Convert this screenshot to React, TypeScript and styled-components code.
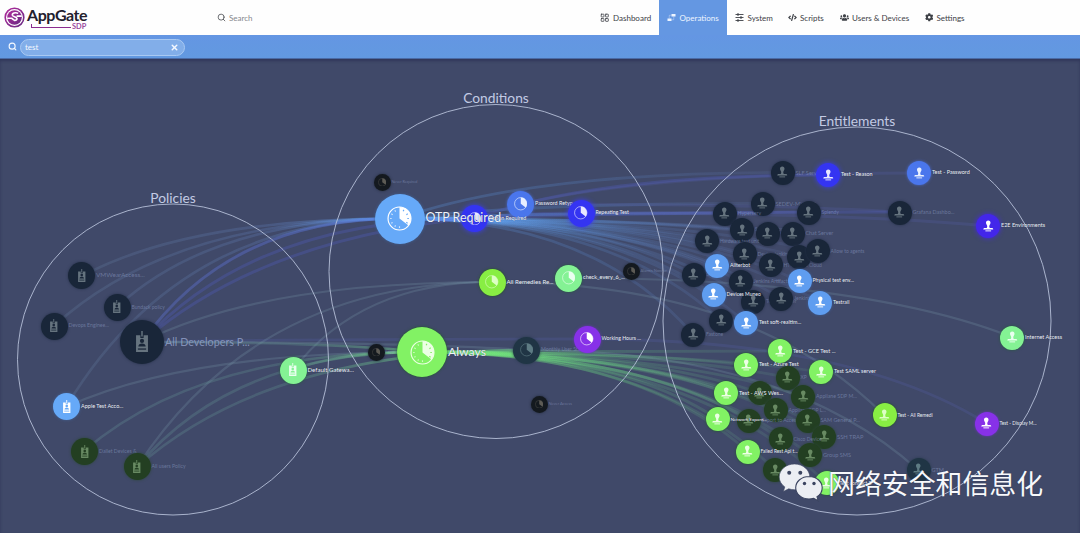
import React from 'react';
import styled, { createGlobalStyle, css } from 'styled-components';
import { LuSearch, LuLayoutGrid, LuX } from 'react-icons/lu';
import { FaCog, FaUsers, FaCode } from 'react-icons/fa';

const GlobalStyle = createGlobalStyle`
  * { box-sizing: border-box; }
  body { margin: 0; background: #404969; font-family: Lato, "Noto Sans CJK SC", sans-serif; }
`;

const Page = styled.div`
  display: flex;
  flex-direction: column;
  width: 1080px;
  height: 533px;
  overflow: hidden;
  background: #404969;
`;

const Header = styled.header`
  display: flex;
  align-items: stretch;
  flex: none;
  height: 35px;
  background: #fefefe;
`;

const Brand = styled.div`
  display: flex;
  align-items: center;
  width: 217px;
  padding-left: 4px;
  gap: 2px;
`;

const BrandText = styled.div`
  display: flex;
  flex-direction: column;
  width: 60px;
  padding-top: 1px;
`;

const BrandName = styled.span`
  font-size: 16px;
  font-weight: 700;
  line-height: 17px;
  letter-spacing: -0.45px;
  color: #23202d;
`;

const BrandSub = styled.span`
  display: flex;
  align-items: center;
  gap: 1px;
  padding-left: 4px;
  height: 7px;
  font-size: 7.4px;
  font-weight: 700;
  line-height: 7px;
  color: #9a4a9e;
  &::before {
    content: '';
    width: 39px;
    height: 3px;
    border-left: 1px solid #8c2c8f;
    border-bottom: 1px solid #8c2c8f;
    margin-bottom: 2px;
  }
`;

const GlobalSearch = styled.div`
  display: flex;
  align-items: center;
  gap: 3px;
  flex: 1;
  font-size: 8px;
  color: #85878c;
  svg { color: #3f4247; }
`;

const Nav = styled.nav`
  display: flex;
  margin-right: 108px;
`;

const NavItem = styled.a<{ $w: number; $active?: boolean }>`
  display: flex;
  align-items: center;
  gap: 3.5px;
  width: ${p => p.$w}px;
  padding-left: 8.5px;
  font-size: 8px;
  white-space: nowrap;
  color: ${p => (p.$active ? '#eef5ff' : '#3d4046')};
  background: ${p => (p.$active ? '#6497e2' : 'transparent')};
  svg { flex: none; }
`;

const FilterBar = styled.div`
  display: flex;
  align-items: center;
  flex: none;
  height: 24px;
  padding-left: 8px;
  gap: 3px;
  background: linear-gradient(#6496e3, #6299e0);
  border-bottom: 1px solid #4a6ba6;
  color: #f4f8ff;
`;

const FilterField = styled.div`
  display: flex;
  align-items: center;
  justify-content: space-between;
  width: 165px;
  height: 17px;
  margin-top: 1px;
  padding: 0 5px 0 4px;
  border: 1px solid #a9c9f2;
  border-radius: 9px;
  background: #82aee9;
  font-size: 8px;
  line-height: 1;
`;

const Stage = styled.main`
  position: relative;
  flex: 1;
  overflow: hidden;
  background: #404969;
  box-shadow: inset 0 2px 3px rgba(38, 44, 80, 0.6);
`;

const Wires = styled.svg`
  display: block;
  width: 1080px;
  height: 474px;
`;

const Bundle = styled.g`
  fill: none;
  filter: blur(0.6px);
`;

const Ring = styled.circle`
  fill: none;
  stroke: #b6bfd8;
  stroke-width: 0.9;
`;

const GroupTitle = styled.h2<{ $x: number; $y: number }>`
  position: absolute;
  left: ${p => p.$x}px;
  top: ${p => p.$y}px;
  transform: translate(-50%, -50%);
  margin: 0;
  font-size: 13.8px;
  font-weight: 400;
  white-space: nowrap;
  color: #c3cbe4;
`;

const NodeWrap = styled.div<{ $x: number; $y: number; $r: number }>`
  position: absolute;
  display: flex;
  align-items: center;
  gap: 1px;
  height: ${p => p.$r * 2}px;
  left: ${p => p.$x - p.$r}px;
  top: ${p => p.$y - p.$r}px;
`;

const Disc = styled.div<{ $r: number; $fill: string; $halo: string; $glow: number }>`
  display: flex;
  align-items: center;
  justify-content: center;
  flex: none;
  width: ${p => p.$r * 2}px;
  height: ${p => p.$r * 2}px;
  border-radius: 50%;
  background: ${p => p.$fill};
  box-shadow: 0 0 ${p => p.$glow}px ${p => p.$halo};
`;

const Label = styled.span<{ $size: number; $dim: boolean }>`
  font-size: ${p => p.$size}px;
  line-height: 1;
  white-space: nowrap;
  ${p => p.$dim
    ? css`color: rgba(150, 165, 205, ${p.$size > 10 ? 0.8 : 0.5});`
    : css`color: #eef2fa; text-shadow: 0 0 1px rgba(30, 36, 60, 0.6);`}
`;

const Watermark = styled.div`
  position: absolute;
  left: 778px;
  top: 399px;
  display: flex;
  align-items: center;
  gap: 5px;
  height: 50px;
`;

const WatermarkText = styled.span`
  font-family: "Noto Sans CJK SC", sans-serif;
  font-size: 26.9px;
  line-height: 1;
  white-space: nowrap;
  color: #f7f8fb;
  text-shadow: 0 0 1px #2f3650;
`;

type Kind = 'badge' | 'clock' | 'stamp';

const BadgeIcon = ({ size, color, hole }: { size: number; color: string; hole: string }) => (
  <svg width={size} height={size} viewBox="0 0 24 24">
    <path d="M11.200 0h1.600v6h-1.600z" fill={color} />
    <path d="M5.500 4.500h4.700v3h3.600v-3h4.700V23h-13z" fill={color} />
    <circle cx="12" cy="10.800" r="2.300" fill={hole} />
    <path d="M8 17c0-2.300 1.700-3.400 4-3.400s4 1.100 4 3.400z" fill={hole} />
    <path d="M7.500 19h9v1.400h-9z" fill={hole} />
  </svg>
);

const ClockIcon = ({ size, color, hole, ticks }: { size: number; color: string; hole: string; ticks: boolean }) => (
  <svg width={size} height={size} viewBox="0 0 24 24">
    <circle cx="12" cy="12" r="11" fill="none" stroke={color} strokeWidth={1.1} />
    <path d="M12 12V1a11 11 0 0 1 8.700 17.700z" fill={color} />
    {ticks && (
      <g strokeWidth="1.100">
        <path d="M15.500 5l.7-1.300M18.600 8.300l1.300-.8M19.500 12H21M18.500 15.700l1.300.8" stroke={hole} />
        <path d="M12 19.500V21M8.200 18.600l-.7 1.300M5.400 15.800l-1.300.7M4.500 12H3M5.500 8.300l-1.400-.8M8.300 5.400l-.8-1.300" stroke={color} strokeOpacity="0.7" />
      </g>
    )}
  </svg>
);

const StampIcon = ({ size, color }: { size: number; color: string }) => (
  <svg width={size} height={size} viewBox="0 0 24 24" fill={color}>
    <path d="M12 1c3 0 4.500 2 4.300 4.600-.2 2.300-1.800 3.900-2.300 5.700-.2 1.300 0 2.900 1 4.200h-6c1-1.300 1.200-2.900 1-4.200-.5-1.800-2.100-3.400-2.300-5.700C7.500 3 9 1 12 1z" />
    <path d="M5 15.500h14c1.600 0 2.500 1 2.500 2.800h-19c0-1.800.9-2.800 2.500-2.800z" />
    <path d="M6.500 20h11v1.800h-11z" />
  </svg>
);

interface GraphNode {
  x: number;
  y: number;
  r: number;
  kind: Kind;
  tone: string;
  label?: string;
  size?: number;
}

interface Tone { fill: string; halo: string; icon: string; dim: boolean; glow?: number }

const TONES: Record<string, Tone> = {
  navy: { fill: '#192639', halo: '#253048', icon: '#66747f', dim: true },
  black: { fill: '#14191f', halo: '#222a3a', icon: '#5d5b55', dim: true },
  forest: { fill: '#233f22', halo: '#2c4738', icon: '#688a62', dim: true },
  teal: { fill: '#203545', halo: '#273a4c', icon: '#5e7c84', dim: true },
  sky: { fill: '#5f9df0', halo: '#3c5f9c', icon: '#ffffff', dim: false },
  aqua: { fill: '#66a9f8', halo: '#426397', icon: '#ffffff', dim: false },
  azure: { fill: '#4a76ec', halo: '#4a6bd0', icon: '#e8f0ff', dim: false },
  blue: { fill: '#3434f2', halo: '#3a3cf5', icon: '#e8e8ff', dim: false, glow: 5 },
  indigo: { fill: '#4326ea', halo: '#4326ea', icon: '#ffffff', dim: false, glow: 5 },
  violet: { fill: '#8731e8', halo: '#6a35bd', icon: '#ffffff', dim: false },
  lime: { fill: '#82f264', halo: '#215b29', icon: '#ecffe5', dim: false },
  leaf: { fill: '#88ee43', halo: '#24571f', icon: '#dcffc4', dim: false },
  mint: { fill: '#84f294', halo: '#255f3c', icon: '#eafff0', dim: false },
};

const policy = (x: number, y: number, tone: string, label: string, size: number, r = 13.5): GraphNode =>
  ({ x, y, r, kind: 'badge', tone, label, size });
const condition = (x: number, y: number, tone: string, label: string, size: number, r = 13.5): GraphNode =>
  ({ x, y, r, kind: 'clock', tone, label, size });
const entitlement = (x: number, y: number, tone: string, label = '', size = 5.4): GraphNode =>
  ({ x, y, r: 12, kind: 'stamp', tone, label, size });

const NODES: GraphNode[] = [
  policy(81.500, 275.500, 'navy', 'VMWearAccess...', 6.4),
  policy(117, 307, 'navy', 'Bundack policy', 5),
  policy(54, 326, 'navy', 'Devops Enginee...', 5.2),
  policy(142, 342, 'navy', 'All Developers P...', 10.8, 22),
  policy(66.500, 406.500, 'aqua', 'Apple Test Acco...', 5.5),
  policy(84.500, 451.500, 'forest', 'Dallet Devices &', 5.2),
  policy(137, 466.500, 'forest', 'All users Policy', 5.2),
  policy(293, 370, 'mint', 'Default Gatewa...', 6.1),

  condition(382, 182, 'black', 'Never Required', 3.8, 8.5),
  condition(520.500, 204, 'azure', 'Password Retyp...', 5.4),
  condition(474.500, 218.500, 'blue', 'Action Required', 5.3),
  condition(581, 213, 'blue', 'Repeating Test', 5.2),
  condition(492, 282, 'leaf', 'All Remedies Re...', 6.1),
  condition(568.500, 278, 'mint', 'check_every_6_...', 5.5),
  condition(631, 271, 'black', 'Alarms Noncur', 4, 8.5),
  condition(376, 352, 'black', 'Logged in', 4, 8.5),
  condition(526.500, 350, 'teal', 'Monthly User Sta...', 5.2),
  condition(587, 339, 'violet', 'Working Hours ...', 5.2),
  condition(539, 404, 'black', 'Never Access', 4, 8.5),
  condition(399.500, 218.500, 'aqua', 'OTP Required', 12.4, 25),
  condition(422, 352, 'lime', 'Always', 12.2, 25),

  entitlement(782.500, 172.500, 'navy', 'SLF Server', 5.6),
  entitlement(762.500, 203.500, 'navy', 'SEDEV-MYTLPS', 5.6),
  entitlement(724.500, 213.500, 'navy', 'Hyperserv', 5.2),
  entitlement(808.500, 212.500, 'navy', 'Splendy', 5),
  entitlement(742, 230, 'navy', 'Stan Dashboar', 5.2),
  entitlement(767.500, 233.500, 'navy', 'Cloud', 5),
  entitlement(792.500, 233.500, 'navy', 'Chat Server', 5.4),
  entitlement(707, 241, 'navy', 'Hardware test unit', 4.8),
  entitlement(744.500, 254, 'navy', 'Device Jenkins', 5),
  entitlement(770.500, 265, 'navy', 'HTTP DNS Cloud', 5),
  entitlement(799, 257, 'navy'),
  entitlement(817.500, 251, 'navy', 'Allow to agents', 5),
  entitlement(693.500, 274.500, 'navy', 'Servers', 4.8),
  entitlement(740.500, 281.500, 'navy', 'Jenkins Artifacts', 5),
  entitlement(753, 301.500, 'navy', 'Testrail server', 5),
  entitlement(781, 298.500, 'navy', 'Jenkins', 5),
  entitlement(721, 320.500, 'navy'),
  entitlement(693, 334.500, 'navy', 'Fastone', 5),
  entitlement(899.500, 212.500, 'navy', 'Grafana Dashbo...', 5.4),
  entitlement(787.500, 377.500, 'forest', 'XP', 5),
  entitlement(759.500, 393, 'forest'),
  entitlement(803, 396.500, 'forest', 'Appliane SDP M...', 5.2),
  entitlement(775.500, 410, 'forest', 'Appliane SDP L...', 5),
  entitlement(748.500, 420.500, 'forest', 'Export to Access', 5),
  entitlement(807.500, 420.500, 'forest', 'SAM General P...', 5.4),
  entitlement(824, 436.500, 'forest', 'SSH TRAP', 5.8),
  entitlement(780.500, 439, 'forest', 'Cisco Device', 5),
  entitlement(810, 455, 'forest', 'Group SMS', 5.6),
  entitlement(775, 470, 'forest'),
  entitlement(918.500, 469.500, 'teal', 'GTM', 5.6),

  entitlement(828, 175, 'blue', 'Test - Reason'),
  entitlement(919, 173, 'azure', 'Test - Password', 5.5),
  entitlement(988, 226, 'indigo', 'E2E Environments', 5.5),
  entitlement(717, 265.500, 'sky', 'Allterbot', 5.2),
  entitlement(713.500, 294.500, 'sky', 'Devices Muneo', 5),
  entitlement(799.500, 281, 'sky', 'Physical test env...', 5.2),
  entitlement(820, 302.500, 'sky', 'Testrail', 5.3),
  entitlement(746, 323, 'sky', 'Test soft-realtim...', 5.4),
  entitlement(780, 351, 'lime', 'Test - GCE Test ...', 5.6),
  entitlement(746, 365, 'lime', 'Test - Azure Test', 5.5),
  entitlement(821, 372, 'lime', 'Test SAML server', 5.5),
  entitlement(726, 393, 'lime', 'Test - AWS Wes...', 5.7),
  entitlement(717.500, 419, 'lime', 'Network Expans...', 4.6),
  entitlement(747.500, 451.500, 'lime', 'Failed Rest Api t...', 4.8),
  entitlement(826.500, 483, 'lime', 'Test connect 2', 5),
  entitlement(884.500, 415, 'leaf', 'Test - All Remedi', 4.8),
  entitlement(1012, 337.500, 'mint', 'Internet Access', 5.5),
  entitlement(986.500, 423.500, 'violet', 'Test - Display M...', 4.8),
];

type Point = [number, number];

/* Every wire leaves its higher end horizontally and bends towards the lower one. */
const wire = ([x0, y0]: Point, [x1, y1]: Point) => {
  const cx = y1 < y0 ? x0 + (x1 - x0) * 0.34 : x0 + (x1 - x0) * 0.66;
  return `M${x0} ${y0}Q${cx} ${Math.min(y0, y1)} ${x1} ${y1 + 0.01}`;
};

const OTP: Point = [399.5, 218.5];
const ALWAYS: Point = [422, 352];
const RETYPE: Point = [520.5, 204];
const ACTION: Point = [475, 218.5];
const REPEAT: Point = [581, 213];
const REMEDIES: Point = [492.5, 282];
const CHECK: Point = [569, 278];
const MONTHLY: Point = [526.5, 350];
const HOURS: Point = [587, 339];
const DEVS: Point = [142, 342];
const USERS: Point = [137, 467];

const targets = (test: (n: GraphNode) => boolean): Point[] =>
  NODES.filter(n => n.kind === 'stamp' && test(n)).map(n => [n.x, n.y]);

const upper = targets(n => n.y < 340 && n.x < 830 && (n.tone === 'navy' || n.tone === 'sky'));
const lower = targets(n => (n.tone === 'forest' || n.tone === 'lime') && n.x < 830);

interface BundleSpec { stroke: string; opacity: number; width: number; links: [Point, Point][] }

const BUNDLES: BundleSpec[] = [
  { stroke: 'url(#otp-out)', opacity: 0.85, width: 2.8, links: upper.map(t => [OTP, t] as [Point, Point]) },
  { stroke: 'url(#always-out)', opacity: 0.85, width: 2.8, links: lower.map(t => [ALWAYS, t] as [Point, Point]) },
  {
    stroke: 'url(#otp-in)', opacity: 0.9, width: 2.6,
    links: [[[82, 276], OTP], [[54, 326], OTP], [[117, 307], OTP], [[66, 407], OTP], [DEVS, OTP]],
  },
  {
    stroke: '#5460d8', opacity: 0.26, width: 3,
    links: [[DEVS, OTP], [DEVS, ACTION], [DEVS, REPEAT], [ACTION, [828, 175]], [ACTION, [899, 212]]],
  },
  {
    stroke: '#5c6bc0', opacity: 0.18, width: 2.8,
    links: [[RETYPE, [919, 173]], [RETYPE, [899, 212]], [REPEAT, [988, 226]], [REPEAT, [808, 212]], [DEVS, HOURS], [HOURS, [986, 423]]],
  },
  {
    stroke: '#7c9fae', opacity: 0.24, width: 2.2,
    links: [
      [DEVS, REMEDIES], [USERS, REMEDIES], [[293, 370], REMEDIES],
      [REMEDIES, [884, 415]], [CHECK, [1012, 337]], [MONTHLY, [918, 470]],
      [[66, 407], ALWAYS], [DEVS, MONTHLY],
    ],
  },
  {
    stroke: 'url(#always-in)', opacity: 0.9, width: 2.6,
    links: [[[84, 451], ALWAYS], [USERS, ALWAYS], [USERS, MONTHLY], [[293, 370], ALWAYS], [DEVS, ALWAYS]],
  },
];

interface FadeStop { at: number; color: string; opacity: number }

const Fade = ({ id, x1, x2, stops }: { id: string; x1: number; x2: number; stops: FadeStop[] }) => (
  <linearGradient id={id} gradientUnits="userSpaceOnUse" x1={x1} y1="0" x2={x2} y2="0">
    {stops.map(s => <stop key={s.at} offset={s.at} stopColor={s.color} stopOpacity={s.opacity} />)}
  </linearGradient>
);

const GraphNodeView = ({ node }: { node: GraphNode }) => {
  const tone = TONES[node.tone];
  const big = node.r > 20;
  return (
    <NodeWrap $x={node.x} $y={node.y - 59} $r={node.r}>
      <Disc $r={node.r} $fill={tone.fill} $halo={tone.halo} $glow={tone.glow ?? 3}>
        {node.kind === 'badge' && <BadgeIcon size={big ? 22 : 13.5} color={tone.icon} hole={tone.fill} />}
        {node.kind === 'clock' && (
          <ClockIcon size={big ? 25 : node.r < 10 ? 8.5 : 13.5} color={tone.icon} hole={tone.fill} ticks={big} />
        )}
        {node.kind === 'stamp' && <StampIcon size={12.5} color={tone.icon} />}
      </Disc>
      {node.label && <Label $size={node.size ?? 5.4} $dim={tone.dim}>{node.label}</Label>}
    </NodeWrap>
  );
};

const BrandMark = () => (
  <svg width="21" height="21" viewBox="0 0 21 21">
    <defs>
      <linearGradient id="mark" x1="0" y1="0" x2="1" y2="1">
        <stop offset="0" stopColor="#b02a9b" />
        <stop offset="1" stopColor="#672a83" />
      </linearGradient>
    </defs>
    <circle cx="10.500" cy="10.500" r="9.300" fill="#fff" stroke="url(#mark)" strokeWidth="1.600" />
    <circle cx="10.500" cy="10.500" r="7.300" fill="url(#mark)" />
    <path d="M14.200 6.400c-2.800-1.500-6.400-.2-5.800 1.900.5 1.500 4.200 1.400 4.600 3.200.2 1.300-1.300 2.200-3 1.700M3.200 11.300h4.600l2.200 1.900M12.600 9.100h5.200" fill="none" stroke="#fff" strokeWidth="1.600" />
  </svg>
);

const OperationsIcon = () => (
  <svg width="9" height="9" viewBox="0 0 18 18" fill="currentColor">
    <path d="M9 2h8v5H9zM1 11h8v5H1z" />
    <path d="M4.500 11V4.500H9M9 13.500h4.500V7" fill="none" stroke="currentColor" strokeWidth="1.200" strokeOpacity="0.6" />
  </svg>
);

const SystemIcon = () => (
  <svg width="9" height="9" viewBox="0 0 18 18" stroke="currentColor" strokeWidth="1.800" fill="none">
    <path d="M1 3h16M1 9h16M1 15h16" />
    <path d="M6 .5v5M12 6.500v5M6 12.500v5" strokeWidth="2.600" />
  </svg>
);

const ChatBubbles = () => (
  <svg width="45" height="42" viewBox="0 0 45 42">
    <path d="M16.500 2C8 2 1.200 7.800 1.200 15c0 4 2.200 7.500 5.600 9.900L5.400 29.500l5.300-2.700c1.800.6 3.700.9 5.800.9 8.500 0 15.300-5.700 15.300-12.700S25 2 16.500 2z" fill="#eceef3" stroke="#3b4460" strokeWidth=".6" />
    <path d="M31 14.500c-7.400 0-13.300 5-13.300 11.200S23.600 37 31 37c1.600 0 3.200-.2 4.600-.7l4.600 2.500-1.200-4c3.200-2.100 5.200-5.300 5.200-9.100 0-6.200-5.900-11.200-13.200-11.200z" fill="#eceef3" stroke="#3b4460" strokeWidth="1.100" />
    <g fill="#3b4460">
      <circle cx="11.200" cy="10.800" r="2" />
      <circle cx="22.300" cy="10.800" r="2" />
      <circle cx="26.500" cy="21.500" r="1.700" />
      <circle cx="36" cy="21.500" r="1.700" />
    </g>
  </svg>
);

export default function App() {
  return (
    <Page>
      <GlobalStyle />
      <Header>
        <Brand>
          <BrandMark />
          <BrandText>
            <BrandName>AppGate</BrandName>
            <BrandSub>SDP</BrandSub>
          </BrandText>
        </Brand>
        <GlobalSearch><LuSearch size={9} />Search</GlobalSearch>
        <Nav>
          <NavItem $w={67}><LuLayoutGrid size={9.500} />Dashboard</NavItem>
          <NavItem $w={68} $active><OperationsIcon />Operations</NavItem>
          <NavItem $w={52.500}><SystemIcon />System</NavItem>
          <NavItem $w={52}><FaCode size={9} />Scripts</NavItem>
          <NavItem $w={85}><FaUsers size={9} />Users &amp; Devices</NavItem>
          <NavItem $w={56}><FaCog size={8.500} />Settings</NavItem>
        </Nav>
      </Header>
      <FilterBar>
        <LuSearch size={9} strokeWidth={3} />
        <FilterField>test<LuX size={9} strokeWidth={4} /></FilterField>
      </FilterBar>
      <Stage>
        <Wires viewBox="0 59 1080 474">
          <defs>
            <Fade id="otp-out" x1={400} x2={780} stops={[
              { at: 0, color: '#62a4f4', opacity: 0.3 },
              { at: 0.45, color: '#5f9be8', opacity: 0.24 },
              { at: 1, color: '#6d83c0', opacity: 0.15 },
            ]} />
            <Fade id="always-out" x1={422} x2={800} stops={[
              { at: 0, color: '#78f078', opacity: 0.36 },
              { at: 0.45, color: '#68d080', opacity: 0.28 },
              { at: 1, color: '#6ba98f', opacity: 0.16 },
            ]} />
            <Fade id="otp-in" x1={60} x2={400} stops={[
              { at: 0, color: '#6c88a8', opacity: 0.25 },
              { at: 0.6, color: '#6485c4', opacity: 0.28 },
              { at: 1, color: '#5f9df0', opacity: 0.55 },
            ]} />
            <Fade id="always-in" x1={80} x2={422} stops={[
              { at: 0, color: '#6c9aa0', opacity: 0.3 },
              { at: 0.6, color: '#669c94', opacity: 0.3 },
              { at: 1, color: '#70d888', opacity: 0.55 },
            ]} />
          </defs>
          {BUNDLES.map((b, i) => (
            <Bundle key={i} stroke={b.stroke} strokeOpacity={b.opacity} strokeWidth={b.width}>
              {b.links.map(([from, to], j) => <path key={j} d={wire(from, to)} />)}
            </Bundle>
          ))}
          <Ring cx={173} cy={359.500} r={155.500} />
          <Ring cx={496} cy={271.500} r={167} />
          <Ring cx={857} cy={321} r={194} />
        </Wires>
        <GroupTitle $x={173} $y={138}>Policies</GroupTitle>
        <GroupTitle $x={496} $y={38}>Conditions</GroupTitle>
        <GroupTitle $x={857} $y={61}>Entitlements</GroupTitle>
        {NODES.map((n, i) => <GraphNodeView key={i} node={n} />)}
        <Watermark>
          <ChatBubbles />
          <WatermarkText>网络安全和信息化</WatermarkText>
        </Watermark>
      </Stage>
    </Page>
  );
}
